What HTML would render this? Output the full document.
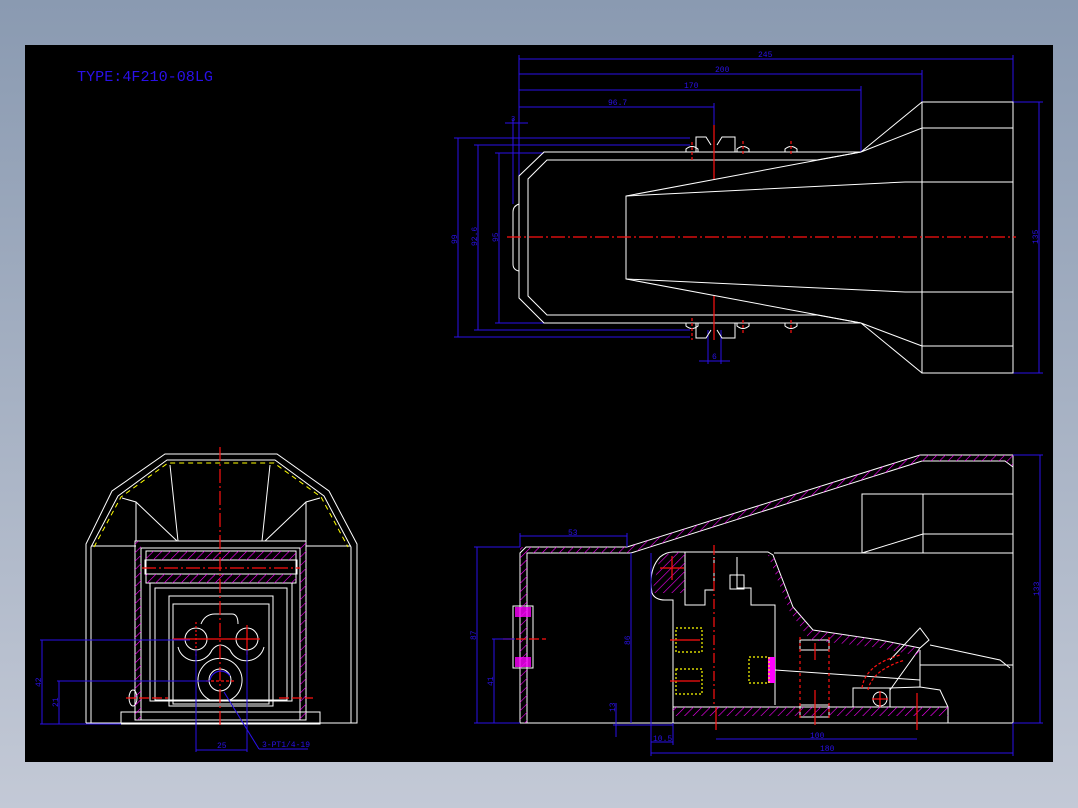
<!DOCTYPE html>
<html><head><meta charset="utf-8"><style>
html,body{margin:0;padding:0;width:1078px;height:808px;overflow:hidden;background:linear-gradient(#8a9ab1,#c3c9d6);}
svg{position:absolute;left:0;top:0}
</style></head><body>
<svg width="1078" height="808" viewBox="0 0 1078 808" xmlns="http://www.w3.org/2000/svg">
<defs>
<pattern id="h" width="6" height="6" patternUnits="userSpaceOnUse" patternTransform="rotate(45)">
<line x1="0" y1="0" x2="0" y2="6" stroke="#ff00ff" stroke-width="1.2"/>
</pattern>
</defs>
<rect x="25" y="45" width="1028" height="717" fill="#000"/>
<text x="77" y="81" fill="#2a10e8" font-family="Liberation Mono, monospace" font-size="15" textLength="136" lengthAdjust="spacingAndGlyphs">TYPE:4F210-08LG</text>

<!-- ===== TOP VIEW ===== -->
<g fill="none" stroke="#2a10e8" stroke-width="1">
<line x1="519" y1="59" x2="1013" y2="59"/><line x1="519" y1="74" x2="922" y2="74"/>
<line x1="519" y1="90" x2="861" y2="90"/><line x1="519" y1="107" x2="714" y2="107"/>
<line x1="519" y1="55" x2="519" y2="176"/><line x1="1013" y1="55" x2="1013" y2="102"/>
<line x1="922" y1="70" x2="922" y2="102"/><line x1="861" y1="86" x2="861" y2="152"/>
<line x1="714" y1="103" x2="714" y2="125"/>
<line x1="505" y1="123" x2="528" y2="123"/><line x1="513" y1="118" x2="513" y2="204"/>
<line x1="458" y1="138" x2="458" y2="337"/><line x1="454" y1="138" x2="690" y2="138"/><line x1="454" y1="337" x2="690" y2="337"/>
<line x1="478" y1="145" x2="478" y2="330"/><line x1="474" y1="145" x2="690" y2="145"/><line x1="474" y1="330" x2="690" y2="330"/>
<line x1="499" y1="153" x2="499" y2="323"/><line x1="495" y1="153" x2="544" y2="153"/><line x1="495" y1="323" x2="544" y2="323"/>
<line x1="1039" y1="102" x2="1039" y2="373"/><line x1="1013" y1="102" x2="1043" y2="102"/><line x1="1013" y1="373" x2="1043" y2="373"/>
<line x1="708" y1="361" x2="721" y2="361"/><line x1="699" y1="361" x2="730" y2="361"/>
<line x1="708" y1="330" x2="708" y2="364"/><line x1="721" y1="330" x2="721" y2="364"/>
</g>
<g fill="#2a10e8" font-family="Liberation Mono, monospace" font-size="8">
<text x="758" y="57">245</text><text x="715" y="72">200</text><text x="684" y="88">170</text><text x="608" y="105">96.7</text>
<text x="511" y="121" font-size="7">3</text><text x="712" y="359">6</text>
<text transform="translate(457,244) rotate(-90)">99</text>
<text transform="translate(477,246) rotate(-90)">92.6</text>
<text transform="translate(498,242) rotate(-90)">95</text>
<text transform="translate(1038,244) rotate(-90)">135</text>
</g>
<g fill="none" stroke="#fff" stroke-width="1">
<rect x="922" y="102" width="91" height="271"/>
<line x1="922" y1="128" x2="1013" y2="128"/><line x1="922" y1="182" x2="1013" y2="182"/>
<line x1="922" y1="292" x2="1013" y2="292"/><line x1="922" y1="346" x2="1013" y2="346"/>
<polyline points="922,102 861,152 922,128"/><polyline points="922,373 861,323 922,346"/>
<polyline points="861,152 544,152 519,176 519,298 544,323 861,323"/>
<polyline points="817,160 547,160 528,179 528,296 547,315 817,315"/>
<line x1="817" y1="160" x2="861" y2="152"/><line x1="817" y1="315" x2="861" y2="323"/>
<path d="M519 204 Q513 206 513 212 L513 264 Q513 270 519 271"/>
<polyline points="861,152 626,196 626,279 861,323"/>
<polyline points="626,196 905,182 922,182"/><polyline points="626,279 905,292 922,292"/>
<path d="M696 152 V137 H706 L711 145 M735 152 V137 H722 L717 145"/>
<path d="M696 323 V338 H706 L711 330 M735 323 V338 H722 L717 330"/>
<path d="M686 152 v-3 q6 -5 12 0 v3 M737 152 v-3 q6 -5 12 0 v3 M785 152 v-3 q6 -5 12 0 v3"/>
<path d="M686 323 v3 q6 5 12 0 v-3 M737 323 v3 q6 5 12 0 v-3 M785 323 v3 q6 5 12 0 v-3"/>
</g>
<g stroke="#ff1010" stroke-width="1.2" fill="none">
<line x1="507" y1="237" x2="1016" y2="237" stroke-dasharray="14,3,2,3"/>
<line x1="714" y1="125" x2="714" y2="179"/><line x1="714" y1="296" x2="714" y2="340"/>
<line x1="692" y1="142" x2="692" y2="160" stroke-dasharray="3,2"/><line x1="743" y1="141" x2="743" y2="155" stroke-dasharray="3,2"/><line x1="791" y1="141" x2="791" y2="155" stroke-dasharray="3,2"/>
<line x1="692" y1="318" x2="692" y2="340" stroke-dasharray="3,2"/><line x1="743" y1="320" x2="743" y2="334" stroke-dasharray="3,2"/><line x1="791" y1="320" x2="791" y2="334" stroke-dasharray="3,2"/>
</g>

<!-- ===== FRONT VIEW ===== -->
<g fill="none" stroke="#fff" stroke-width="1">
<polyline points="86,723 86,544 112,491 165,454 277,454 329,491 357,544 357,723 86,723"/>
<polyline points="91,723 91,547 118,496 167,460 275,460 324,496 351,547 351,723"/>
<line x1="91" y1="546" x2="136" y2="546"/><line x1="306" y1="546" x2="351" y2="546"/>
<line x1="170" y1="465" x2="178" y2="541"/><line x1="270" y1="465" x2="262" y2="541"/>
<polyline points="122,498 136,502 177,541"/><polyline points="320,498 306,502 265,541"/>
<line x1="136" y1="502" x2="136" y2="541"/><line x1="306" y1="502" x2="306" y2="541"/>
<rect x="135" y="541" width="171" height="179"/>
<rect x="141" y="548" width="159" height="172"/>
<rect x="146" y="551" width="150" height="32"/>
<rect x="145" y="560" width="152" height="14"/>
<rect x="150" y="583" width="142" height="118"/>
<rect x="155" y="588" width="132" height="112"/>
<rect x="169" y="596" width="104" height="110"/>
<rect x="173" y="604" width="96" height="100"/>
<rect x="121" y="712" width="199" height="12"/>
<circle cx="196" cy="639" r="11"/><circle cx="247" cy="639" r="11"/><circle cx="220" cy="680" r="11"/>
<path d="M178 647 A18 18 0 0 0 212 650 Q220 640 230 650 A18 18 0 0 0 264 647 M201 624 Q205 614 215 614 H232 Q238 614 238 624"/>
<path d="M210 700 A22 22 0 1 1 230 700"/>
<ellipse cx="133" cy="698" rx="4" ry="8"/>
</g>
<rect x="135" y="541" width="6" height="179" fill="url(#h)"/>
<rect x="300" y="541" width="6" height="179" fill="url(#h)"/>
<rect x="146" y="551" width="150" height="9" fill="url(#h)"/>
<rect x="146" y="574" width="150" height="9" fill="url(#h)"/>
<polyline points="94,547 121,497 168,463 274,463 321,497 348,547" fill="none" stroke="#ffff00" stroke-width="1" stroke-dasharray="5,4"/>
<g stroke="#ff1010" stroke-width="1.2" fill="none">
<line x1="220" y1="447" x2="220" y2="728" stroke-dasharray="14,3,2,3"/>
<line x1="142" y1="568" x2="300" y2="568" stroke-dasharray="14,3,2,3"/>
<line x1="173" y1="639" x2="260" y2="639"/>
<line x1="196" y1="622" x2="196" y2="656" stroke-dasharray="2,2"/><line x1="247" y1="625" x2="247" y2="655"/>
<line x1="206" y1="681" x2="235" y2="681" stroke-dasharray="3,2"/>
<line x1="126" y1="698" x2="168" y2="698" stroke-dasharray="10,3"/><line x1="279" y1="698" x2="313" y2="698" stroke-dasharray="10,3"/>
</g>
<g fill="none" stroke="#2a10e8" stroke-width="1">
<line x1="42" y1="640" x2="42" y2="724"/><line x1="40" y1="640" x2="190" y2="640"/><line x1="40" y1="724" x2="121" y2="724"/>
<line x1="59" y1="681" x2="59" y2="724"/><line x1="57" y1="681" x2="210" y2="681"/>
<line x1="196" y1="650" x2="196" y2="752"/><line x1="247" y1="650" x2="247" y2="752"/><line x1="196" y1="750" x2="247" y2="750"/>
<line x1="224" y1="692" x2="259" y2="749"/><line x1="259" y1="749" x2="308" y2="749"/>
<path d="M210 680 A11 11 0 0 1 230 676" stroke-width="1.2"/>
</g>
<g fill="#2a10e8" font-family="Liberation Mono, monospace" font-size="8">
<text x="217" y="748">25</text><text x="262" y="747">3-PT1/4-19</text>
<text transform="translate(41,687) rotate(-90)">42</text>
<text transform="translate(58,707) rotate(-90)">21</text>
</g>

<!-- ===== SIDE VIEW ===== -->
<g fill="none" stroke="#fff" stroke-width="1">
<polyline points="520,723 520,553 526,547 627,547 920,455 1013,455 1013,723 520,723"/>
<polyline points="527,723 527,553 631,553 922,461 1005,461 1013,467"/>
<rect x="862" y="494" width="151" height="59"/>
<line x1="923" y1="494" x2="923" y2="553"/><line x1="862" y1="553" x2="923" y2="534"/><line x1="923" y1="534" x2="1013" y2="534"/>
<line x1="774" y1="553" x2="862" y2="553"/>
<rect x="513" y="606" width="20" height="62"/>
<path d="M652 593 Q648 570 660 557 Q666 552 673 552 H768 L773 555 L793 607 L813 630 L880 640 L920 648"/>
<path d="M652 593 Q655 600 665 600 H673 V707"/>
<polyline points="685,552 685,605 705,605 705,590 714,590 714,557"/>
<polyline points="737,557 737,588 751,588 751,605 775,605 775,705"/>
<line x1="673" y1="707" x2="948" y2="707"/>
<polyline points="673,707 673,723 948,723 948,707 940,690 920,687 890,688"/>
<rect x="800" y="640" width="29" height="10"/><rect x="800" y="705" width="29" height="12"/>
<line x1="775" y1="670" x2="920" y2="680"/>
<rect x="853" y="688" width="37" height="19"/>
<circle cx="880" cy="699" r="7"/>
<polyline points="890,690 920,648 929,640 920,628 890,660"/>
<line x1="920" y1="665" x2="1013" y2="665"/>
<line x1="920" y1="650" x2="920" y2="687"/>
<path d="M930 645 L1000 660 L1010 668"/>
<rect x="730" y="575" width="14" height="14"/>
</g>
<polygon points="652,593 660,557 673,552 685,552 685,593" fill="url(#h)"/>
<polygon points="627,547 920,455 1013,455 1013,467 1005,461 922,461 631,553 527,553 527,723 520,723 520,547" fill="url(#h)"/>
<polygon points="773,555 793,607 813,630 880,640 920,648 918,656 880,648 810,640 790,612 768,555" fill="url(#h)"/>
<rect x="673" y="707" width="275" height="9" fill="url(#h)"/>
<rect x="768" y="657" width="7" height="26" fill="#ff00ff"/>
<rect x="515" y="607" width="16" height="10" fill="#ff00ff" opacity="0.8"/>
<rect x="515" y="657" width="16" height="10" fill="#ff00ff" opacity="0.8"/>
<g fill="none" stroke="#ffff00" stroke-width="1.2" stroke-dasharray="2,2">
<rect x="676" y="628" width="26" height="24"/><rect x="676" y="669" width="26" height="25"/><rect x="749" y="657" width="20" height="26"/>
</g>
<g stroke="#ff1010" stroke-width="1.2" fill="none">
<line x1="714" y1="545" x2="714" y2="707" stroke-dasharray="10,3,2,3"/>
<line x1="800" y1="637" x2="800" y2="720" stroke-dasharray="3,3"/><line x1="829" y1="637" x2="829" y2="720" stroke-dasharray="3,3"/>
<line x1="660" y1="568" x2="684" y2="568"/><line x1="672" y1="556" x2="672" y2="580"/>
<line x1="872" y1="699" x2="888" y2="699"/><line x1="880" y1="691" x2="880" y2="707"/>
<line x1="503" y1="639" x2="546" y2="639" stroke-dasharray="10,3"/>
<line x1="670" y1="640" x2="700" y2="640"/><line x1="670" y1="681" x2="700" y2="681"/>
<path d="M862 688 Q865 665 900 655 M868 690 Q872 670 905 660" stroke-dasharray="3,2"/>
<line x1="716" y1="707" x2="716" y2="730"/><line x1="917" y1="693" x2="917" y2="730"/>
<line x1="815" y1="643" x2="815" y2="660"/><line x1="815" y1="690" x2="815" y2="725"/>
</g>
<g fill="none" stroke="#2a10e8" stroke-width="1">
<line x1="520" y1="536" x2="627" y2="536"/><line x1="520" y1="533" x2="520" y2="547"/><line x1="627" y1="533" x2="627" y2="547"/>
<line x1="477" y1="547" x2="477" y2="723"/><line x1="474" y1="547" x2="520" y2="547"/><line x1="474" y1="723" x2="520" y2="723"/>
<line x1="494" y1="639" x2="494" y2="723"/><line x1="492" y1="639" x2="515" y2="639"/>
<line x1="631" y1="553" x2="631" y2="723"/>
<line x1="616" y1="703" x2="616" y2="737"/><line x1="613" y1="725" x2="673" y2="725"/>
<line x1="651" y1="553" x2="651" y2="756"/><line x1="673" y1="723" x2="673" y2="745"/><line x1="651" y1="742" x2="673" y2="742"/>
<line x1="716" y1="739" x2="917" y2="739"/>
<line x1="651" y1="753" x2="1013" y2="753"/><line x1="1013" y1="723" x2="1013" y2="756"/>
<line x1="1040" y1="455" x2="1040" y2="723"/><line x1="1013" y1="455" x2="1043" y2="455"/><line x1="1013" y1="723" x2="1043" y2="723"/>
</g>
<g fill="#2a10e8" font-family="Liberation Mono, monospace" font-size="8">
<text x="568" y="535">53</text><text x="653" y="741">10.5</text><text x="810" y="738">100</text><text x="820" y="751">180</text>
<text transform="translate(476,640) rotate(-90)">87</text>
<text transform="translate(493,686) rotate(-90)">41</text>
<text transform="translate(630,645) rotate(-90)">86</text>
<text transform="translate(615,712) rotate(-90)">13</text>
<text transform="translate(1039,596) rotate(-90)">133</text>
</g>
</svg>
</body></html>
